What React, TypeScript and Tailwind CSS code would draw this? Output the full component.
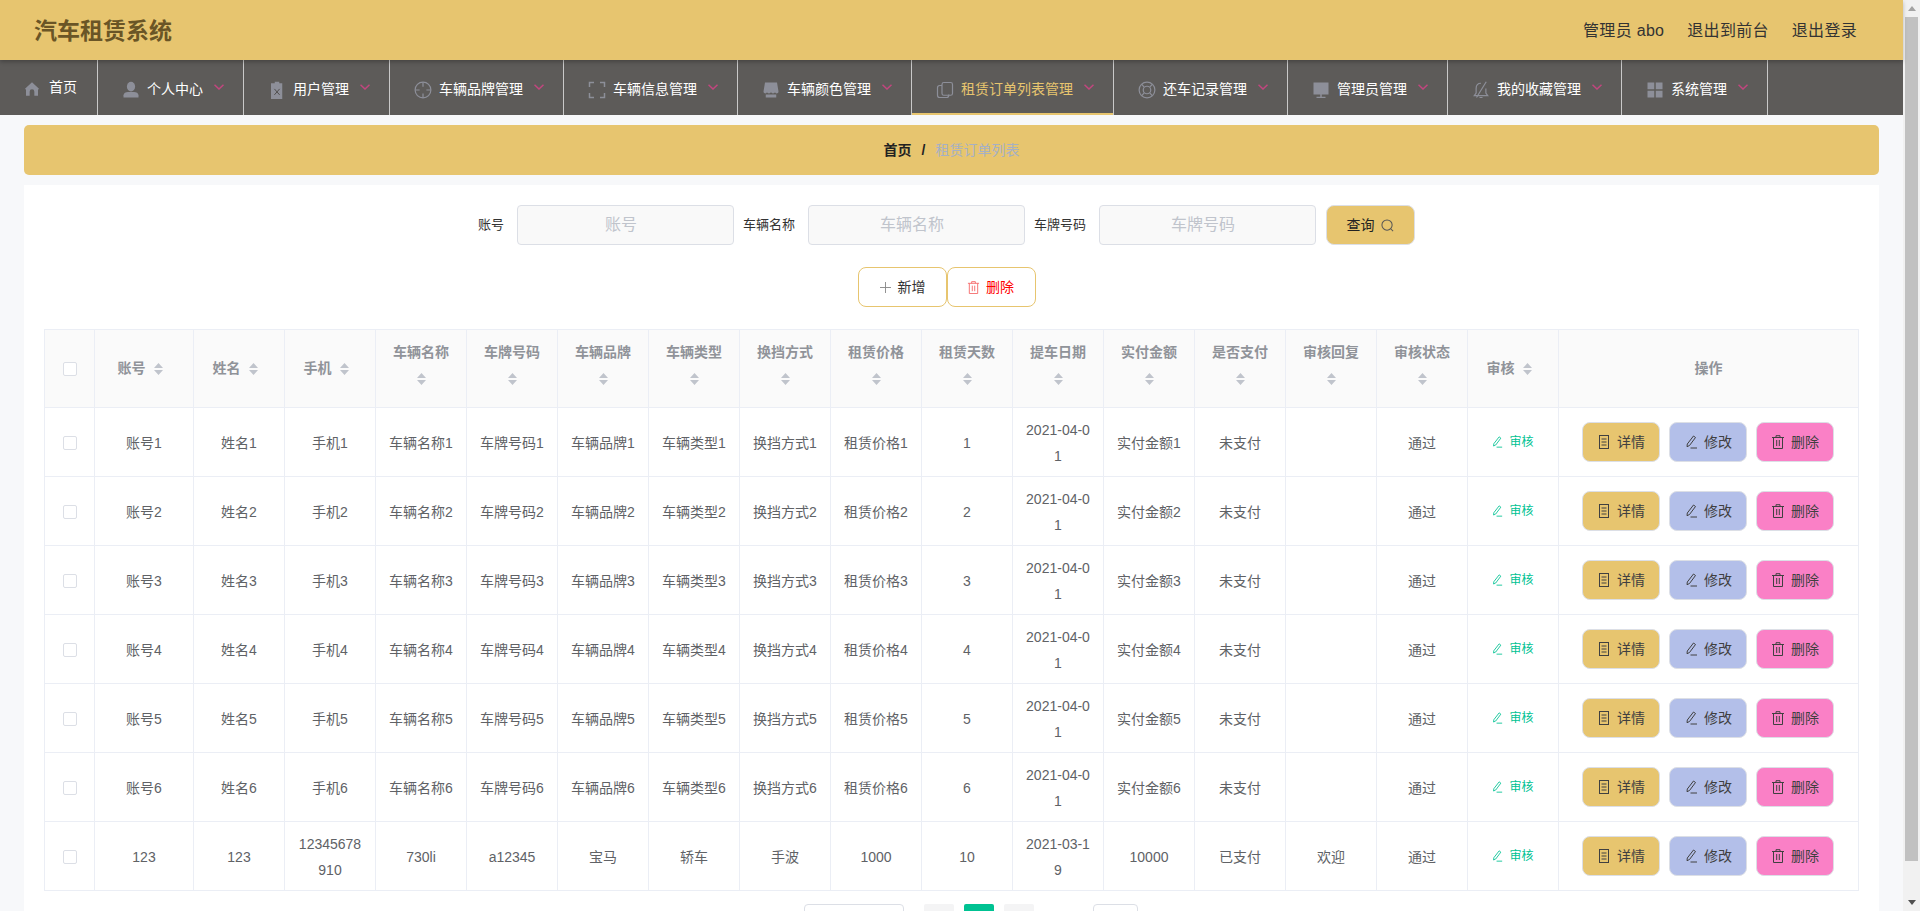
import React from "react";

const FONT = { fontFamily: '"Liberation Sans","Noto Sans CJK SC",sans-serif' };

function Ico({ children, className = "" }: { children: React.ReactNode; className?: string }) {
  return (
    <svg viewBox="0 0 24 24" className={"shrink-0 " + className} fill="none" stroke="currentColor" strokeWidth="1.6">
      {children}
    </svg>
  );
}

const navIcons: Record<string, React.ReactNode> = {
  home: <path fill="currentColor" stroke="none" d="M12 2 1.5 11.5 3 13v9h5.5v-6a3.5 3.5 0 0 1 7 0v6H21v-9l1.5-1.5z" />,
  user: (
    <>
      <ellipse cx="12" cy="7.5" rx="5.5" ry="6.5" fill="currentColor" stroke="none" />
      <path fill="currentColor" stroke="none" d="M2 22v-3c0-3 3-4.500 6-4.500h8c3 0 6 1.500 6 4.500v3z" />
    </>
  ),
  release: (
    <>
      <path fill="currentColor" stroke="none" d="M9 1h6v2h4v21H4V3h5z" />
      <path d="M8.500 10.500l7 8m0-8l-7 8" stroke="#4f4d4c" strokeWidth="1.300" />
    </>
  ),
  aim: (
    <>
      <circle cx="12" cy="12" r="10.500" />
      <path d="M12 1.500v6M12 16.500v6M1.500 12h6M16.500 12h6" />
    </>
  ),
  full: <path d="M2 8V2h6M16 2h6v6M22 16v6h-6M8 22H2v-6" strokeWidth="2" />,
  shop: (
    <path
      fill="currentColor"
      stroke="none"
      d="M4 2h16l2 12c0 2-1.500 2.500-2.500 2.500S17.500 15.500 17.300 15c-.3 1-1.500 1.500-2.600 1.500S12.300 15.500 12 15c-.3.5-1.500 1.500-2.700 1.500S7 16 6.700 15c-.2.5-1.200 1.500-2.200 1.500S2 16 2 14zM5 18h14v4H5z"
    />
  ),
  copy: (
    <>
      <rect x="8" y="2" width="14" height="17" rx="2.500" />
      <path d="M8 6H5a3 3 0 0 0-3 3v10a3 3 0 0 0 3 3h9a3 3 0 0 0 3-3v-1" />
    </>
  ),
  help: (
    <>
      <circle cx="12" cy="12" r="10.500" />
      <circle cx="12" cy="12" r="5" />
      <path d="M5 4.500l3.300 3.800M19 4.500l-3.300 3.800M5 19.500l3.300-3.800M19 19.500l-3.300-3.800" />
    </>
  ),
  plat: (
    <>
      <path fill="currentColor" stroke="none" d="M2 2h20v16H2zM11 18h2v3h-2zM6 21h12v1.500H6z" />
    </>
  ),
  bell: (
    <>
      <path d="M12 3c-4 0-6.500 3-6.500 7v6L3 19.500h18L18.500 16v-6" />
      <path d="M10 22h4M19 1 6 22" />
    </>
  ),
  menu: <path fill="currentColor" stroke="none" d="M2 2h9v9H2zM13 2h9v9h-9zM2 13h9v9H2zM13 13h9v9h-9z" />,
};

const navs: [string, string, boolean][] = [
  ["user", "个人中心", false],
  ["release", "用户管理", false],
  ["aim", "车辆品牌管理", false],
  ["full", "车辆信息管理", false],
  ["shop", "车辆颜色管理", false],
  ["copy", "租赁订单列表管理", true],
  ["help", "还车记录管理", false],
  ["plat", "管理员管理", false],
  ["bell", "我的收藏管理", false],
  ["menu", "系统管理", false],
];

function Nav() {
  return (
    <nav className="flex h-[55px] bg-[#5d5b59] text-[14px] text-white">
      <a className="flex h-full items-center border-r border-[#c9c9c9] pl-[24px] pr-[20px] pt-[3px]">
        <Ico className="mr-[9px] h-[16px] w-[16px] text-[#8d8f99]">{navIcons.home}</Ico>
        <span className="mb-[3px]">首页</span>
      </a>
      {navs.map(([ic, label, active]) => (
        <a
          key={label}
          className={
            "flex h-full items-center border-r border-[#c9c9c9] pl-[24px] pr-[19px] pt-[4px] " +
            (active ? "text-[#e7c56f] shadow-[inset_0_-2px_0_#e7c56f]" : "")
          }
        >
          <Ico className="mr-[7px] h-[18px] w-[18px] text-[#8d8f99]">{navIcons[ic]}</Ico>
          <span>{label}</span>
          <svg viewBox="0 0 10 6" className="mb-[6px] ml-[11px] h-[6px] w-[10px] text-[#c2467f]" fill="none" stroke="currentColor" strokeWidth="1.500">
            <path d="M.5.700 5 5 9.500.700" />
          </svg>
        </a>
      ))}
    </nav>
  );
}

function Caret() {
  return (
    <svg viewBox="0 0 9 12" className="h-[12px] w-[9px] shrink-0 text-[#c0c4cc]" fill="currentColor">
      <path d="M4.500 0 9 5H0zM0 7h9l-4.500 5z" />
    </svg>
  );
}

const IconEdit = ({ className = "" }: { className?: string }) => (
  <svg viewBox="0 0 14 14" className={className} fill="none" stroke="currentColor" strokeWidth="1">
    <path d="M9.500 1 11.500 2.500 5.500 10.500 3 11.700 3.300 9z" />
    <path d="M6.500 13H13" />
  </svg>
);
const IconDoc = ({ className = "" }: { className?: string }) => (
  <svg viewBox="0 0 14 14" className={className} fill="none" stroke="currentColor" strokeWidth="1">
    <rect x="2.500" y=".5" width="9" height="13" />
    <path d="M4.500 4h5M4.500 7h5M4.500 10h5" />
  </svg>
);
const IconTrash = ({ className = "" }: { className?: string }) => (
  <svg viewBox="0 0 14 14" className={className} fill="none" stroke="currentColor" strokeWidth="1">
    <path d="M1 2.500h12M5 2.500V.7h4v1.800M2.500 2.500v11h9v-11M5.700 5v6M8.300 5v6" />
  </svg>
);

const widths = [50, 99, 91, 91, 91, 91, 91, 91, 91, 91, 91, 91, 91, 91, 91, 91, 91, 300];

const heads: [string, boolean][] = [
  ["账号", true],
  ["姓名", true],
  ["手机", true],
  ["车辆名称", false],
  ["车牌号码", false],
  ["车辆品牌", false],
  ["车辆类型", false],
  ["换挡方式", false],
  ["租赁价格", false],
  ["租赁天数", false],
  ["提车日期", false],
  ["实付金额", false],
  ["是否支付", false],
  ["审核回复", false],
  ["审核状态", false],
  ["审核", true],
];

const rows: string[][] = [1, 2, 3, 4, 5, 6]
  .map((n) => [
    `账号${n}`,
    `姓名${n}`,
    `手机${n}`,
    `车辆名称${n}`,
    `车牌号码${n}`,
    `车辆品牌${n}`,
    `车辆类型${n}`,
    `换挡方式${n}`,
    `租赁价格${n}`,
    `${n}`,
    "2021-04-01",
    `实付金额${n}`,
    "未支付",
    "",
    "通过",
  ])
  .concat([["123", "123", "12345678910", "730li", "a12345", "宝马", "轿车", "手波", "1000", "10", "2021-03-19", "10000", "已支付", "欢迎", "通过"]]);

function ActionBtn({ bg, icon, label }: { bg: string; icon: React.ReactNode; label: string }) {
  return (
    <button className={"flex h-[40px] w-[78px] items-center justify-center gap-[6px] rounded-[8px] border border-[#dcdfe6] text-[14px] text-[#404040] " + bg}>
      {icon}
      {label}
    </button>
  );
}

function DataTable() {
  return (
    <table className="w-[1814px] table-fixed border-collapse text-center text-[14px] leading-[23px] text-[#606266]">
      <colgroup>
        {widths.map((w, i) => (
          <col key={i} style={{ width: w }} />
        ))}
      </colgroup>
      <thead>
        <tr className="h-[78px] bg-[#fafafa] text-[#909399]">
          <th className="border border-[#ebeef5]">
            <span className="mx-auto block h-[14px] w-[14px] rounded-[2px] border border-[#dcdfe6] bg-white" />
          </th>
          {heads.map(([h, inline]) => (
            <th key={h} className="border border-[#ebeef5] font-bold">
              {inline ? (
                <div className="flex items-center justify-center gap-[8px] pr-[8px]">
                  <span>{h}</span>
                  <Caret />
                </div>
              ) : (
                <div className="flex flex-col items-center pb-[6px]">
                  <span className="leading-[27px]">{h}</span>
                  <span className="flex h-[27px] items-center">
                    <Caret />
                  </span>
                </div>
              )}
            </th>
          ))}
          <th className="border border-[#ebeef5] font-bold">操作</th>
        </tr>
      </thead>
      <tbody>
        {rows.map((r, i) => (
          <tr key={i} className="h-[69px]">
            <td className="border border-[#ebeef5] pt-[2px]">
              <span className="mx-auto block h-[14px] w-[14px] rounded-[2px] border border-[#dcdfe6] bg-white" />
            </td>
            {r.map((c, j) => (
              <td key={j} className="border border-[#ebeef5] px-[12px] pt-[1px] leading-[26px] break-all">
                {c}
              </td>
            ))}
            <td className="border border-[#ebeef5]">
              <span className="flex items-center justify-center gap-[6px] pr-[1px] text-[12px] text-[#00c292]">
                <IconEdit className="h-[12px] w-[12px]" />
                审核
              </span>
            </td>
            <td className="border border-[#ebeef5]">
              <div className="flex justify-center gap-[9px] pr-[1px]">
                <ActionBtn bg="bg-[#e7c56f]" icon={<IconDoc className="h-[14px] w-[14px]" />} label="详情" />
                <ActionBtn bg="bg-[#b3bfe9]" icon={<IconEdit className="h-[14px] w-[14px]" />} label="修改" />
                <ActionBtn bg="bg-[#fa80c6]" icon={<IconTrash className="h-[14px] w-[14px]" />} label="删除" />
              </div>
            </td>
          </tr>
        ))}
      </tbody>
    </table>
  );
}

function Field({ label, labelW }: { label: string; labelW: string }) {
  return (
    <div className="flex items-center gap-[12px]">
      <span className={"text-center text-[13px] text-[#333] " + labelW}>{label}</span>
      <input
        placeholder={label}
        className="h-[40px] w-[217px] rounded-[4px] border border-[#dcdfe6] bg-[#f9f9f9] pr-[8px] text-center text-[16px] outline-none placeholder:text-[#c0c4cc]"
      />
    </div>
  );
}

function Scrollbar() {
  return (
    <div className="flex h-[911px] w-[17px] shrink-0 flex-col bg-[#f1f1f1]">
      <div className="flex h-[17px] items-center justify-center">
        <svg viewBox="0 0 8 5" className="h-[5px] w-[8px] text-[#a3a3a3]" fill="currentColor">
          <path d="M4 0l4 5H0z" />
        </svg>
      </div>
      <div className="mx-[2px] h-[844px] bg-[#c1c1c1]" />
      <div className="flex-1" />
      <div className="flex h-[17px] items-center justify-center">
        <svg viewBox="0 0 8 5" className="h-[5px] w-[8px] text-[#505050]" fill="currentColor">
          <path d="M0 0h8L4 5z" />
        </svg>
      </div>
    </div>
  );
}

export default function App() {
  return (
    <div className="flex h-[911px] w-[1920px] overflow-hidden bg-[#f7f8fa]" style={FONT}>
      <div className="w-[1903px] shrink-0">
        <header className="relative z-10 flex h-[60px] items-center justify-between bg-[#e7c56f] pl-[34px] pr-[46px] pt-[2px] shadow-[0_2px_4px_rgba(0,0,0,0.25)]">
          <h1 className="text-[23px] leading-none font-bold text-[#6a5526]">汽车租赁系统</h1>
          <div className="flex gap-[23px] text-[16px] tracking-[0.3px] text-[#333]">
            <span>管理员 abo</span>
            <span>退出到前台</span>
            <span>退出登录</span>
          </div>
        </header>
        <Nav />
        <div className="mx-[24px] mt-[10px] flex h-[50px] items-center justify-center rounded-[5px] bg-[#e7c56f] text-[14px]">
          <span className="font-bold text-[#222]">首页</span>
          <span className="mx-[10px] font-bold text-[#222]">/</span>
          <span className="text-[#a5b0c5]">租赁订单列表</span>
        </div>
        <main className="mx-[24px] mt-[10px] bg-white px-[20px] pt-[20px]">
          <div className="flex items-center justify-center gap-[9px] pr-[11px]">
            <Field label="账号" labelW="w-[27px]" />
            <Field label="车辆名称" labelW="w-[53px]" />
            <Field label="车牌号码" labelW="w-[53px]" />
            <button className="ml-[1px] flex h-[40px] w-[89px] items-center justify-center gap-[6px] rounded-[8px] border border-[#dcdfe6] bg-[#e7c56f] text-[14px] text-[#222]">
              查询
              <svg viewBox="0 0 14 14" className="h-[13px] w-[13px] text-[#555]" fill="none" stroke="currentColor" strokeWidth="1.100">
                <circle cx="6.500" cy="6.500" r="5.500" />
                <path d="M10.500 10.500 13 13" />
              </svg>
            </button>
          </div>
          <div className="mt-[22px] flex justify-center pr-[9px]">
            <button className="flex h-[40px] w-[89px] items-center justify-center gap-[7px] rounded-[8px] border border-[#e7c56f] bg-white text-[14px] text-[#333]">
              <svg viewBox="0 0 12 12" className="h-[11px] w-[11px] text-[#888]" fill="none" stroke="currentColor" strokeWidth="1">
                <path d="M6 0v12M0 6h12" />
              </svg>
              新增
            </button>
            <button className="flex h-[40px] w-[89px] items-center justify-center gap-[6px] rounded-[8px] border border-[#e7c56f] bg-white pr-[2px] text-[14px] text-[#f00]">
              <IconTrash className="h-[13px] w-[13px] text-[#f56c6c]" />
              删除
            </button>
          </div>
          <div className="mt-[22px]">
            <DataTable />
          </div>
          <div className="mt-[13px] flex h-[28px] items-start pl-[760px]">
            <div className="h-[28px] w-[100px] rounded-[4px] border border-[#dcdfe6] bg-white" />
            <div className="ml-[20px] h-[28px] w-[30px] rounded-[2px] bg-[#f4f4f5]" />
            <div className="ml-[10px] h-[28px] w-[30px] rounded-[2px] bg-[#00c292]" />
            <div className="ml-[10px] h-[28px] w-[30px] rounded-[2px] bg-[#f4f4f5]" />
            <div className="ml-[59px] h-[28px] w-[45px] rounded-[4px] border border-[#dcdfe6] bg-white" />
          </div>
        </main>
      </div>
      <Scrollbar />
    </div>
  );
}
